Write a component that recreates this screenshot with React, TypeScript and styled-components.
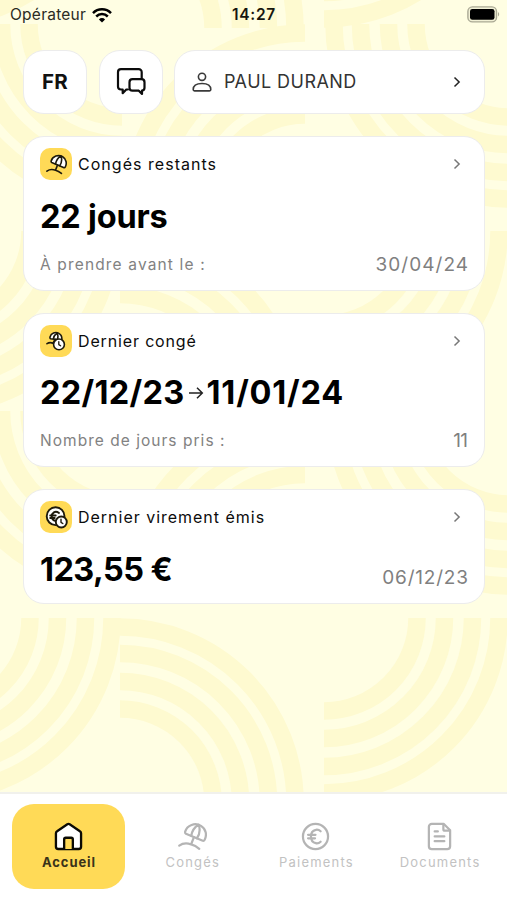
import React from "react";
import styled, { createGlobalStyle, css } from "styled-components";

const GlobalStyle = createGlobalStyle`
  * { box-sizing: border-box; }
  body { margin: 0; background: #fffee3; font-family: "Inter", sans-serif; color: #000; }
  button { font: inherit; color: inherit; border: 0; padding: 0; background: none; }
`;

const Screen = styled.div`
  position: relative;
  width: 507px;
  height: 900px;
  overflow: hidden;
  display: flex;
  flex-direction: column;
  isolation: isolate;
`;

const Backdrop = styled.svg`
  position: absolute;
  inset: 0;
  z-index: -1;
`;

const StatusBar = styled.div`
  height: 30px;
  flex: none;
  display: grid;
  grid-template-columns: 1fr auto 1fr;
  align-items: center;
  padding: 0 7px 0 10px;
  font-size: 15.5px;
  line-height: 30px;
`;

const Carrier = styled.div`
  display: flex;
  align-items: center;
  gap: 6px;
  color: #2b2b24;
  letter-spacing: 0.25px;
`;

const Clock = styled.div`
  font-weight: 600;
  letter-spacing: 0.7px;
  margin-right: 2px;
  color: #16160f;
`;

const BatteryIcon = styled.svg`
  justify-self: end;
  margin-top: -2px;
`;

const Main = styled.main`
  flex: 1;
  display: flex;
  flex-direction: column;
  gap: 22px;
  padding: 19.5px 22px 0 23px;
`;

const surface = css`
  background: #fff;
  border: 1.5px solid #ececec;
  border-radius: 21px;
`;

const Header = styled.header`
  display: flex;
  gap: 11.5px;
  height: 64.5px;
`;

const SquareButton = styled.button`
  ${surface}
  width: 64px;
  display: grid;
  place-items: center;
  font-size: 20.5px;
  font-weight: 700;
  letter-spacing: 0.3px;
  color: #111;
`;

const ProfileButton = styled.button`
  ${surface}
  flex: 1;
  display: flex;
  align-items: center;
  padding: 0 21px 0 17px;
`;

const ProfileName = styled.span`
  flex: 1;
  text-align: left;
  padding-left: 12px;
  font-size: 18px;
  letter-spacing: 0.45px;
  color: #333;
`;

const Card = styled.section<{ $height: number }>`
  ${surface}
  height: ${(p) => p.$height}px;
  display: flex;
  flex-direction: column;
  padding: 11px 16px 0;
`;

const CardHeader = styled.div`
  display: flex;
  align-items: center;
  padding-right: 5px;
`;

const IconTile = styled.div`
  width: 32px;
  height: 32px;
  border-radius: 10px;
  background: #ffda57;
  color: #1d1a0c;
  display: grid;
  place-items: center;
`;

const CardTitle = styled.h2<{ $spacing: number }>`
  flex: 1;
  margin: 0;
  padding-left: 6px;
  font-size: 16px;
  font-weight: 400;
  color: #0c0c0c;
  letter-spacing: ${(p) => p.$spacing}px;
`;

const Figure = styled.div<{ $spacing: number }>`
  display: flex;
  align-items: center;
  height: 40px;
  margin-top: 16px;
  font-size: 32.5px;
  font-weight: 700;
  white-space: pre;
  letter-spacing: ${(p) => p.$spacing}px;
`;

const EndDate = styled.span`
  letter-spacing: 0.8px;
`;

const CardFooter = styled.div`
  display: flex;
  justify-content: space-between;
  align-items: center;
  height: 30px;
  margin-top: 13px;
  color: #828282;
`;

const AmountRow = styled.div`
  display: flex;
  justify-content: space-between;
  align-items: flex-start;
`;

const Caption = styled.span<{ $spacing: number }>`
  font-size: 15.5px;
  letter-spacing: ${(p) => p.$spacing}px;
`;

const Detail = styled.span<{ $spacing: number; $top?: number }>`
  font-size: 19px;
  color: #808080;
  margin-top: ${(p) => p.$top ?? 0}px;
  letter-spacing: ${(p) => p.$spacing}px;
  margin-right: ${(p) => -p.$spacing}px;
`;

const ArrowIcon = styled.svg`
  margin: 0 3px 0 3px;
`;

const TabBar = styled.nav`
  height: 108px;
  flex: none;
  background: #fff;
  border-top: 2px solid #f1f1ec;
  display: grid;
  grid-template-columns: repeat(4, 113px);
  column-gap: 10.7px;
  padding: 10px 11px 11px 12px;
`;

const Tab = styled.button<{ $active?: boolean }>`
  display: flex;
  flex-direction: column;
  align-items: center;
  padding-top: 18px;
  gap: 2px;
  border-radius: 22px;
  background: ${(p) => (p.$active ? "#ffda57" : "transparent")};
  color: ${(p) => (p.$active ? "#3a3319" : "#c2c2c2")};
  font-weight: ${(p) => (p.$active ? 700 : 400)};
`;

const TabLabel = styled.span<{ $spacing: number }>`
  font-size: 13px;
  line-height: 18px;
  letter-spacing: ${(p) => p.$spacing}px;
  margin-right: ${(p) => -p.$spacing}px;
`;

const RING_RADII = [93, 120.5, 148.5, 175];

function Arcs({ cx, cy, sx, sy }: { cx: number; cy: number; sx: 1 | -1; sy: 1 | -1 }) {
  return (
    <g transform={`translate(${cx} ${cy}) scale(${sx} ${sy})`}>
      {RING_RADII.map((r) => (
        <path key={r} d={`M${r} 0A${r} ${r} 0 0 1 0 ${r}`} />
      ))}
    </g>
  );
}

const TILE = 387;

function BackdropPattern() {
  const origins: [number, number][] = [];
  for (let x = -1; x <= 1; x++) for (let y = -1; y <= 1; y++) origins.push([x * TILE, y * TILE]);
  return (
    <Backdrop width="507" height="900" fill="none" stroke="#fefad0" strokeWidth="17.5">
      {origins.map(([x, y]) => (
        <g key={`${x},${y}`} transform={`translate(${x} ${y})`}>
          <Arcs cx={324} cy={231} sx={1} sy={1} />
          <Arcs cx={120} cy={415} sx={1} sy={-1} />
          <Arcs cx={509} cy={411} sx={-1} sy={1} />
          <Arcs cx={305} cy={595} sx={-1} sy={-1} />
        </g>
      ))}
    </Backdrop>
  );
}

function WifiGlyph() {
  return (
    <svg width="20" height="15" viewBox="0 0 20 15" fill="none" stroke="#000" strokeWidth="2.5">
      <path d="M1 5.1a12.7 12.7 0 0 1 18 0M4.2 8.5a8.2 8.2 0 0 1 11.6 0" />
      <path d="M10 14.5 6.9 11.4a4.4 4.4 0 0 1 6.2 0Z" fill="#000" stroke="none" />
    </svg>
  );
}

function BatteryGlyph() {
  return (
    <BatteryIcon width="33" height="17" viewBox="0 0 33 17">
      <rect x="0.9" y="0.9" width="28.6" height="15" rx="4.5" fill="#f2f1d6" stroke="#aaa994" strokeWidth="1.4" />
      <rect x="3" y="3" width="24.5" height="10.8" rx="2.3" />
      <path d="M31 6v4.5c1.6-.7 1.6-3.8 0-4.5Z" fill="#aaa994" />
    </BatteryIcon>
  );
}

function ChatGlyph() {
  return (
    <svg width="30" height="29" viewBox="0 0 30 29" fill="none" stroke="#0c0c0c" strokeWidth="2.2" strokeLinejoin="round" strokeLinecap="round">
      <path d="M25.7 11.5V5.2a3 3 0 0 0-3-3H5a3 3 0 0 0-3 3v14.300a3 3 0 0 0 3 3h1.700v3.700l3.600-3.700h1.600" />
      <path d="M16.500 12.200h9a3 3 0 0 1 3 3v5.500a3 3 0 0 1-2.500 3v3.200l-3.200-3.200h-6.300a3 3 0 0 1-3-3v-5.500a3 3 0 0 1 3-3Z" />
    </svg>
  );
}

function PersonGlyph() {
  return (
    <svg width="20" height="20" viewBox="0 0 20 20" fill="none" stroke="#3a3a3a" strokeWidth="1.6" strokeLinejoin="round">
      <circle cx="10" cy="4.8" r="3.6" />
      <path d="M1.2 17.6c0-4.6 3.8-6.1 8.8-6.1s8.8 1.5 8.8 6.1c0 .8-.5 1.3-1.3 1.3h-15c-.8 0-1.300-.5-1.300-1.300Z" />
    </svg>
  );
}

function Chevron({ color = "#777" }: { color?: string }) {
  return (
    <svg width="12" height="14" viewBox="0 0 12 14" fill="none" stroke={color} strokeWidth="1.5">
      <path d="m3.5 2.5 4.600 4.500-4.600 4.500" />
    </svg>
  );
}

function Parasol({ size, color = "currentColor", fill = "none" }: { size: number; color?: string; fill?: string }) {
  return (
    <svg width={size} height={size} viewBox="0 0 30 30" fill="none" stroke={color} strokeWidth="2.3" strokeLinecap="round" strokeLinejoin="round">
      <path fill={fill} d="M7.400 10C9.400 3.200 17.600.2 23.800 4c5.400 3.400 6.200 9.700 3.800 14.400-.6 1.100-1.600 1.300-2.600.8L8.200 12.200c-.9-.5-1-1.200-.8-2.200Z" />
      <path d="M13.700 14.200c.8-4.500 3.400-8.900 7.600-11.300M19.600 16.800c2.600-3.700 3.400-8.900 2-13.700M16.500 15.700l-2.900 7.300M1.300 24.500c3.400-2.500 8-2.900 12.300-1.300 3.600 1 5.700 2.300 8.400 4.600" />
    </svg>
  );
}

function ParasolClock() {
  return (
    <svg width="20" height="20" viewBox="0 0 20 20" fill="none" stroke="#1d1a0c" strokeWidth="1.6" strokeLinecap="round" strokeLinejoin="round">
      <path fill="#fff" d="M4 6C5 2 9.5.5 12.5 2.100c2.800 1.500 3.700 4 3.300 7L4.400 7.700C4 7.300 3.800 6.800 4 6Z" />
      <path d="M7.500 7.500c.2-2.200 1.600-4 3.700-5.200M11 8.800c1-1.700 1.300-4.200.2-6.500M9 8.300l-2 4M1 12.700c2.300-1.500 4-1.300 6-.4" />
      <circle cx="13" cy="13.400" r="5.400" fill="#fff" />
      <path d="M12.800 10.700v2.900l1.800 1.200" strokeWidth="1.300" />
    </svg>
  );
}

function EuroClock() {
  return (
    <svg width="23" height="23" viewBox="0 0 23 23" fill="none" stroke="#1d1a0c" strokeWidth="1.9" strokeLinecap="round" strokeLinejoin="round">
      <circle cx="10.6" cy="10.2" r="8.9" fill="#fff" />
      <path d="M14 7c-4-3-7.200.2-7.200 3.400 0 2.900 2 4.700 4.400 4.400M5.200 9.500h5.500M5.200 12h4.500" />
      <circle cx="16.300" cy="16" r="5.500" fill="#fff" />
      <path d="M16 13.300v3l1.800 1.200" strokeWidth="1.400" />
    </svg>
  );
}

function RangeArrow() {
  return (
    <ArrowIcon width="16" height="14" viewBox="0 0 16 14" fill="none" stroke="#222" strokeWidth="1.5">
      <path d="M1 7h13M9 1.700 14.300 7 9 12.300" />
    </ArrowIcon>
  );
}

function HomeGlyph() {
  return (
    <svg width="29" height="29" viewBox="0 0 30 30" fill="none" stroke="#0b0a04" strokeWidth="2.4" strokeLinejoin="round">
      <path fill="#fff" d="M2 11.700c0-1 .4-1.700 1.200-2.200L13.800 2.400c.9-.6 1.500-.6 2.400 0l10.600 7.100c.8.500 1.200 1.200 1.200 2.200v13.800c0 1.500-.9 2.400-2.400 2.400H4.400C2.900 27.900 2 27 2 25.500Z" />
      <path fill="#ffda57" d="M10.500 27.900V18c0-1 .7-1.700 1.700-1.700h5.600c1 0 1.700.7 1.700 1.700v9.900" />
    </svg>
  );
}

function EuroGlyph() {
  return (
    <svg width="29" height="29" viewBox="0 0 30 30" fill="none" stroke="#b4b4b4" strokeWidth="2.3" strokeLinecap="round">
      <circle cx="15" cy="15" r="13" />
      <path d="M20.300 9.600c-1.500-1.400-3.300-1.900-5-1.500-3 .6-5 3.500-5 6.900s2 6.300 5 6.900c1.700.4 3.500-.1 5-1.500M7.300 13.300h7.700M7.300 16.900h7.200" />
    </svg>
  );
}

function DocumentGlyph() {
  return (
    <svg width="29" height="29" viewBox="0 0 30 30" fill="none" stroke="#b4b4b4" strokeWidth="2.3" strokeLinejoin="round" strokeLinecap="round">
      <path d="M7 2h12.500l6.500 6.500V25a3 3 0 0 1-3 3H7a3 3 0 0 1-3-3V5a3 3 0 0 1 3-3Z" />
      <path d="M19 2.400v5c0 1 .6 1.600 1.600 1.600h5M10 9.800h3.300M10 14.900h10M10 19.800h10" />
    </svg>
  );
}

export default function App() {
  return (
    <Screen>
      <GlobalStyle />
      <BackdropPattern />
      <StatusBar>
        <Carrier>Opérateur<WifiGlyph /></Carrier>
        <Clock>14:27</Clock>
        <BatteryGlyph />
      </StatusBar>
      <Main>
        <Header>
          <SquareButton>FR</SquareButton>
          <SquareButton aria-label="Messages"><ChatGlyph /></SquareButton>
          <ProfileButton>
            <PersonGlyph />
            <ProfileName>PAUL DURAND</ProfileName>
            <Chevron color="#222" />
          </ProfileButton>
        </Header>
        <Card $height={154.5}>
          <CardHeader>
            <IconTile><Parasol size={21} fill="#fff" /></IconTile>
            <CardTitle $spacing={1.03}>Congés restants</CardTitle>
            <Chevron />
          </CardHeader>
          <Figure $spacing={-0.2}>22 jours</Figure>
          <CardFooter>
            <Caption $spacing={1.15}>À prendre avant le :</Caption>
            <Detail $spacing={1.05}>30/04/24</Detail>
          </CardFooter>
        </Card>
        <Card $height={154.5}>
          <CardHeader>
            <IconTile><ParasolClock /></IconTile>
            <CardTitle $spacing={0.85}>Dernier congé</CardTitle>
            <Chevron />
          </CardHeader>
          <Figure $spacing={0.3}>22/12/23<RangeArrow /><EndDate>11/01/24</EndDate></Figure>
          <CardFooter>
            <Caption $spacing={1.03}>Nombre de jours pris :</Caption>
            <Detail $spacing={-0.8}>11</Detail>
          </CardFooter>
        </Card>
        <Card $height={115}>
          <CardHeader>
            <IconTile><EuroClock /></IconTile>
            <CardTitle $spacing={0.98}>Dernier virement émis</CardTitle>
            <Chevron />
          </CardHeader>
          <AmountRow>
            <Figure $spacing={-0.6}>123,55 €</Figure>
            <Detail $spacing={0.8} $top={33}>06/12/23</Detail>
          </AmountRow>
        </Card>
      </Main>
      <TabBar>
        <Tab $active><HomeGlyph /><TabLabel $spacing={0.9}>Accueil</TabLabel></Tab>
        <Tab><Parasol size={29} color="#b4b4b4" /><TabLabel $spacing={1.2}>Congés</TabLabel></Tab>
        <Tab><EuroGlyph /><TabLabel $spacing={1.2}>Paiements</TabLabel></Tab>
        <Tab><DocumentGlyph /><TabLabel $spacing={1.2}>Documents</TabLabel></Tab>
      </TabBar>
    </Screen>
  );
}
